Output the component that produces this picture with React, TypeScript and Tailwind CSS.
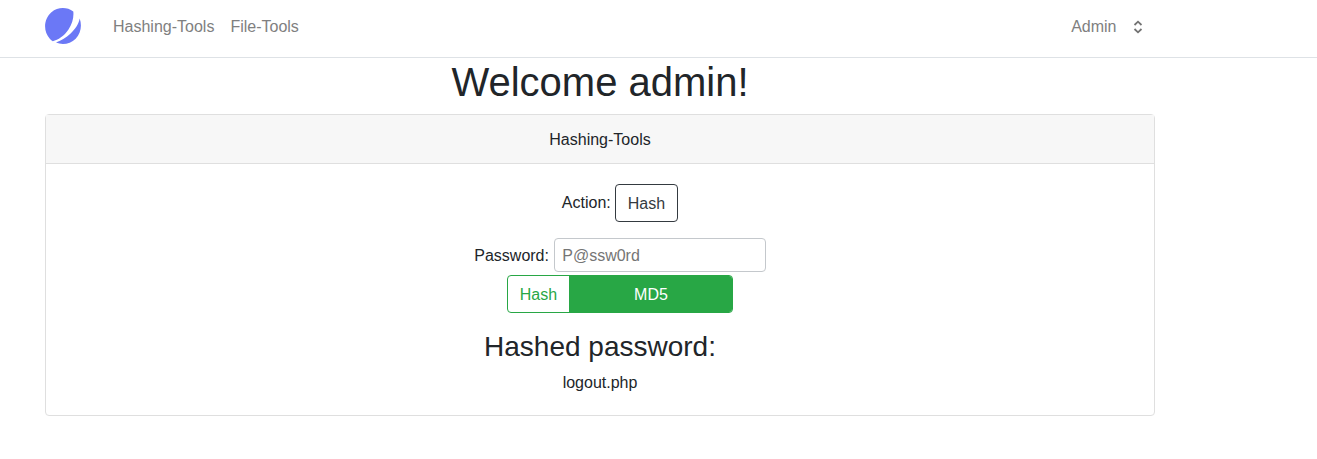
import React from "react";

function Logo() {
  return (
    <svg className="mb-0.5 size-9" viewBox="0 0 36 36" fill="#6b78f6" aria-hidden="true">
      <path d="M28.3 3.4C22 -1.2 12.8 -1.2 6.4 4.2C-1.4 11-2.1 23.2 5 31C5.8 32 6.8 32.8 7.8 33.2C13 32 19.2 28 23.5 21.5C27.2 15.8 29 9.5 28.3 3.4Z" />
      <path d="M34.7 10.6C37.1 17.4 36 25.4 30.7 30.7C25.4 36 17.4 37.3 11 34.6C20.4 31.6 32.8 21.4 34.7 10.6Z" />
    </svg>
  );
}

function SelectorIcon() {
  return (
    <svg
      className="ml-[16.5px] h-3.5 w-2.5"
      viewBox="0 0 10 14"
      fill="none"
      stroke="#737373"
      strokeWidth="1.8"
      aria-hidden="true"
    >
      <path d="M1.5 5L5 1.7L8.5 5M1.5 9L5 12.3L8.5 9" />
    </svg>
  );
}

export default function App() {
  return (
    <div className="min-h-screen bg-white font-['Liberation_Sans',Arial,sans-serif] text-base text-[#212529]">
      <header className="h-[58px] border-b border-[#dee2e6]">
        <div className="ml-[45px] flex h-[53px] w-[1110px] items-center text-[#808080]">
          <Logo />
          <nav className="ml-8 flex gap-4">
            <a href="#hashing">Hashing-Tools</a>
            <a href="#files">File-Tools</a>
          </nav>
          <button type="button" className="mr-3 ml-auto flex items-center">
            Admin
            <SelectorIcon />
          </button>
        </div>
      </header>

      <main className="ml-[45px] w-[1110px] text-center">
        <h1 className="mb-2 text-[40px] leading-[48px] font-medium">Welcome admin!</h1>
        <section className="rounded border border-[#dfdfdf]">
          <div className="border-b border-[#dfdfdf] bg-[#f7f7f7] pt-[13px] pb-[11px]">Hashing-Tools</div>
          <div className="p-5">
            <form className="flex flex-col items-center pl-10" onSubmit={(e) => e.preventDefault()}>
              <div className="mb-4 flex items-center gap-1">
                <span>Action:</span>
                <button
                  type="button"
                  className="h-[38px] rounded border border-[#343a40] px-3 pt-0.5 text-[#343a40]"
                >
                  Hash
                </button>
              </div>
              <label className="mb-[3px] flex items-center gap-[4.8px]">
                <span className="pt-0.5">Password:</span>
                <input
                  className="h-[34px] w-[212px] rounded border border-[#c4c8cc] pt-0.5 pr-2 pl-[7.5px] placeholder:text-[#757575]"
                  placeholder="P@ssw0rd"
                />
              </label>
              <div className="flex h-[38px] w-[226px] overflow-hidden rounded border border-[#28a745]">
                <button type="submit" className="w-[61px] pt-0.5 text-[#28a745]">
                  Hash
                </button>
                <button type="button" className="flex-1 bg-[#28a745] pt-0.5 pl-px text-white">
                  MD5
                </button>
              </div>
            </form>
            <h3 className="mt-[17px] mb-[7px] text-[28px] leading-[34px] font-medium">Hashed password:</h3>
            <p>logout.php</p>
          </div>
        </section>
      </main>
    </div>
  );
}
